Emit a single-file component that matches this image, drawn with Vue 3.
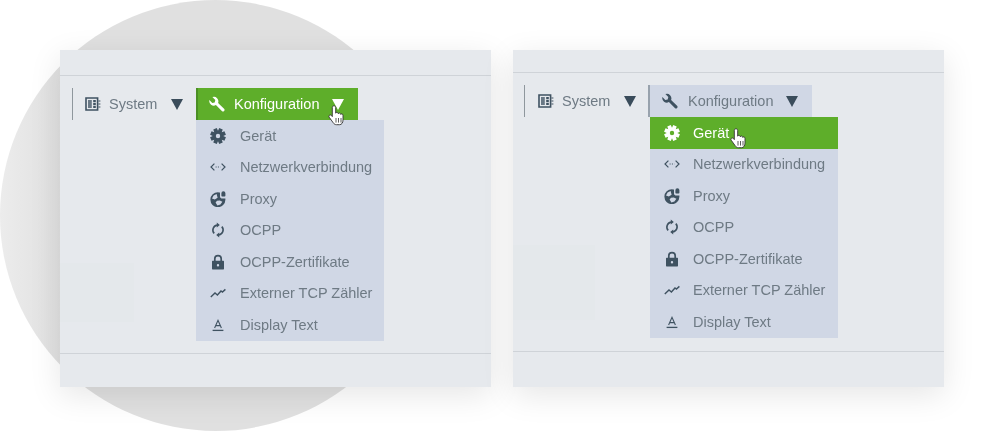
<template>
  <main class="page">
    <div class="circle"></div>

    <section v-for="panel in panels" :key="panel.id" :class="['panel', panel.id]">
      <div class="patch"></div>
      <div class="toolbar">
        <div class="nav-item system">
          <svg class="icon" viewBox="0 0 16 16"><path v-for="(p, i) in icons.system" :key="i" v-bind="p" /></svg>
          <span>System</span>
          <i class="arrow"></i>
        </div>
        <div :class="['nav-item', 'config', { open: panel.id === 'left' }]">
          <svg class="icon" viewBox="0 0 16 16"><path v-for="(p, i) in icons.wrench" :key="i" v-bind="p" /></svg>
          <span>Konfiguration</span>
          <i class="arrow"></i>
          <ul class="menu">
            <li v-for="item in menu" :key="item.label" :class="{ active: panel.active === item.label }">
              <svg class="icon" viewBox="0 0 16 16"><path v-for="(p, i) in icons[item.icon]" :key="i" v-bind="p" /></svg>
              <span>{{ item.label }}</span>
            </li>
          </ul>
        </div>
      </div>
      <div class="footer"></div>

      <svg class="hand" viewBox="0 0 18 24">
        <path d="M6 .8c1 0 1.7.7 1.7 1.7v5.7c.2-.8 1.2-1 1.8-.7.6.3.8.8.8 1.3.1-.8 1.3-1 1.9-.5.4.3.5.7.5 1.1.3-.6 1.3-.7 1.8-.2.4.4.5.9.5 1.5v4.4c0 2.4-1.2 4.6-3.5 4.6H8.5c-1.4 0-2.4-.7-3.2-1.8L1.2 12.2c-.5-.7-.3-1.6.4-2 .7-.4 1.5-.2 2 .4l.7 1V2.5c0-1 .7-1.7 1.7-1.7z" fill="#fff" stroke="#333" stroke-width=".9" />
        <path d="M8 13v4.6M10.5 13v4.6M13 13v4.6" fill="none" stroke="#333" stroke-width=".8" />
      </svg>
    </section>
  </main>
</template>

<script setup>
const panels = [
  { id: 'left', active: '' },
  { id: 'right', active: 'Gerät' },
];

const menu = [
  { label: 'Gerät', icon: 'gear' },
  { label: 'Netzwerkverbindung', icon: 'network' },
  { label: 'Proxy', icon: 'globe' },
  { label: 'OCPP', icon: 'sync' },
  { label: 'OCPP-Zertifikate', icon: 'lock' },
  { label: 'Externer TCP Zähler', icon: 'chart' },
  { label: 'Display Text', icon: 'text' },
];

// 8 teeth around a centre hole
function gearPath() {
  let d = '';
  for (let i = 0; i < 8; i++) {
    const a = (i * Math.PI) / 4 + Math.PI / 8;
    const pts = [[-0.39, 5.3], [-0.24, 8], [0.24, 8], [0.39, 5.3]];
    pts.forEach(([da, r], j) => {
      const x = 8 + r * Math.cos(a + da);
      const y = 8 + r * Math.sin(a + da);
      d += (i === 0 && j === 0 ? 'M' : 'L') + x.toFixed(2) + ' ' + y.toFixed(2);
    });
  }
  return d + 'ZM8 5.8a2.2 2.2 0 1 0 0 4.4a2.2 2.2 0 1 0 0-4.4Z';
}

const fill = { fill: 'currentColor', 'fill-rule': 'evenodd' };
const line = { fill: 'none', stroke: 'currentColor', 'stroke-width': 1.2 };

const icons = {
  system: [
    { ...line, 'stroke-width': 1.6, d: 'M1 2h11.6v12H1z' },
    { ...fill, opacity: 0.75, d: 'M3 4h3.8v8H3z' },
    { ...fill, d: 'M8.2 4h2.6v2.2H8.2zM8.2 6.9h2.6v2.2H8.2zM8.2 9.8h2.6V12H8.2zM13.4 4.4h2v1.2h-2zM13.4 7.4h2v1.2h-2zM13.4 10.4h2v1.2h-2z' },
  ],
  wrench: [
    { ...fill, d: 'M.4 4.1l2.9 2.9 2.4-.6.6-2.4-2.9-2.9A4.5 4.5 0 0 1 9.1 6.9l6.2 6.2a1.6 1.6 0 0 1-2.2 2.2L6.9 9.1A4.5 4.5 0 0 1 .4 4.1z' },
  ],
  gear: [{ ...fill, d: gearPath() }],
  network: [
    { ...line, d: 'M4.4 4.6L1 8l3.4 3.4M11.6 4.6L15 8l-3.4 3.4' },
    { ...line, 'stroke-width': 1.1, 'stroke-dasharray': '1 1.3', d: 'M5.6 8h4.8' },
  ],
  globe: [
    { ...fill, d: 'M8 1.2A7.5 7.5 0 1 0 15.4 8.8V7.4H11.4L10 6.2V1.6A7.5 7.5 0 0 0 8 1.2Z M6.6 3 L3.6 4.6 L2 7.4 L4.8 8.6 L7.6 6.8 Z M7 9.8 L5.6 11.4 L7.4 14.4 L10.4 13.4 L12.4 10.8 L9.8 9.6 Z' },
    { ...fill, d: 'M11.4 2.2a2 2 0 1 1 4 0v2.6a.8.8 0 0 1-.8.8h-2.4a.8.8 0 0 1-.8-.8z' },
  ],
  sync: [
    { ...line, 'stroke-width': 1.6, d: 'M4.2 11.4A5 5 0 0 1 7 3.1M11.8 4.6A5 5 0 0 1 9 12.9' },
    { ...fill, d: 'M6.8.6L9.8 3 6.8 5.4zM9.2 10.6L6.2 13l3 2.4z' },
  ],
  lock: [
    { ...line, 'stroke-width': 1.7, d: 'M4.8 7V4.8a3.2 3.2 0 0 1 6.4 0V7' },
    { ...fill, d: 'M2.6 6.8h10.8a.6.6 0 0 1 .6.6v7.4a.6.6 0 0 1-.6.6H2.6a.6.6 0 0 1-.6-.6V7.4a.6.6 0 0 1 .6-.6zM8 10a1.2 1.2 0 1 0 0 2.4A1.2 1.2 0 0 0 8 10z' },
  ],
  chart: [{ ...line, 'stroke-width': 1.4, d: 'M.8 12L5 8l2.4 2 3.6-4 1.4 1L15.4 4.4' }],
  text: [
    { ...line, 'stroke-width': 1.1, d: 'M4.6 11L8 3.4l3.4 7.6M5.8 8.6h4.4' },
    { ...line, 'stroke-width': 1.3, d: 'M2.6 13.4h10.8' },
  ],
};
</script>

<style scoped>
.page {
  position: relative;
  display: flex;
  gap: 22px;
  box-sizing: border-box;
  width: 1000px;
  height: 431px;
  padding: 50px 0 0 60px;
  overflow: hidden;
  background: #fff;
  font-family: "Liberation Sans", Arial, sans-serif;
  font-size: 14.5px;
  color: #6e7a84;
}

.circle {
  position: absolute;
  left: 0;
  top: 0;
  width: 431px;
  height: 431px;
  border-radius: 50%;
  background: linear-gradient(to right, #ececec, #e0e0e0 60px);
}

.panel {
  position: relative;
  display: flex;
  flex-direction: column;
  flex: none;
  box-sizing: border-box;
  width: 431px;
  height: 337px;
  background: #e6e9ed;
  box-shadow: 0 8px 30px rgba(0, 0, 0, 0.1);
}

.panel.left {
  padding-top: 25px;
}

.panel.right {
  padding-top: 22px;
}

.toolbar {
  display: flex;
  height: 33px;
  padding: 12px 0 0 12px;
  border-top: 1px solid #cfd3d8;
}

.right .toolbar {
  padding-left: 11px;
}

.nav-item {
  position: relative;
  display: flex;
  align-items: center;
  height: 32px;
  filter: blur(0.4px);
}

.nav-item .icon {
  flex: none;
  width: 16px;
  height: 16px;
  color: #3f5261;
}

.system {
  width: 124px;
  box-sizing: border-box;
  padding-left: 12px;
  border-left: 1px solid #8f979d;
}

.right .system {
  width: 124px;
  padding-left: 13px;
}

.system span {
  margin-left: 8px;
}

.arrow {
  width: 0;
  height: 0;
  margin-left: 14px;
  border-left: 6px solid transparent;
  border-right: 6px solid transparent;
  border-top: 11px solid #3a4c5b;
}

.config {
  width: 164px;
  box-sizing: border-box;
  padding-left: 11px;
  border-left: 2px solid #98a2ad;
  background: #d0d7e5;
}

.right .config {
  padding-left: 12px;
}

.config > span {
  margin-left: 9px;
}

.right .config > span {
  margin-left: 10px;
}

.config .arrow {
  margin-left: 13px;
}

.config.open {
  width: 162px;
  border-left-color: #4b8f24;
  background: #5eae2a;
  color: #fff;
}

.config.open > .icon {
  color: #fff;
}

.config.open > .arrow {
  border-top-color: #fff;
}

.menu {
  position: absolute;
  left: -2px;
  top: 32px;
  width: 188px;
  margin: 0;
  padding: 0;
  list-style: none;
  background: #d0d7e5;
  color: #6e7a84;
}

.right .menu {
  left: 0;
}

.menu li {
  display: flex;
  align-items: center;
  height: 31.5px;
  padding-left: 14px;
}

.menu li span {
  margin-left: 14px;
}

.right .menu li span {
  margin-left: 13px;
}

.menu li.active {
  background: #5eae2a;
  color: #fff;
}

.menu li.active .icon {
  color: #fff;
}

.footer {
  margin-top: auto;
  border-top: 1px solid #cfd3d8;
}

.left .footer {
  height: 33px;
}

.right .footer {
  height: 35px;
}

.patch {
  position: absolute;
  left: 0;
  top: 213px;
  width: 74px;
  height: 59px;
  background: #e4e8eb;
}

.right .patch {
  top: 195px;
  width: 82px;
  height: 75px;
}

.hand {
  position: absolute;
  width: 18px;
  height: 24px;
}

.left .hand {
  left: 268px;
  top: 55px;
}

.right .hand {
  left: 217px;
  top: 78px;
}
</style>
